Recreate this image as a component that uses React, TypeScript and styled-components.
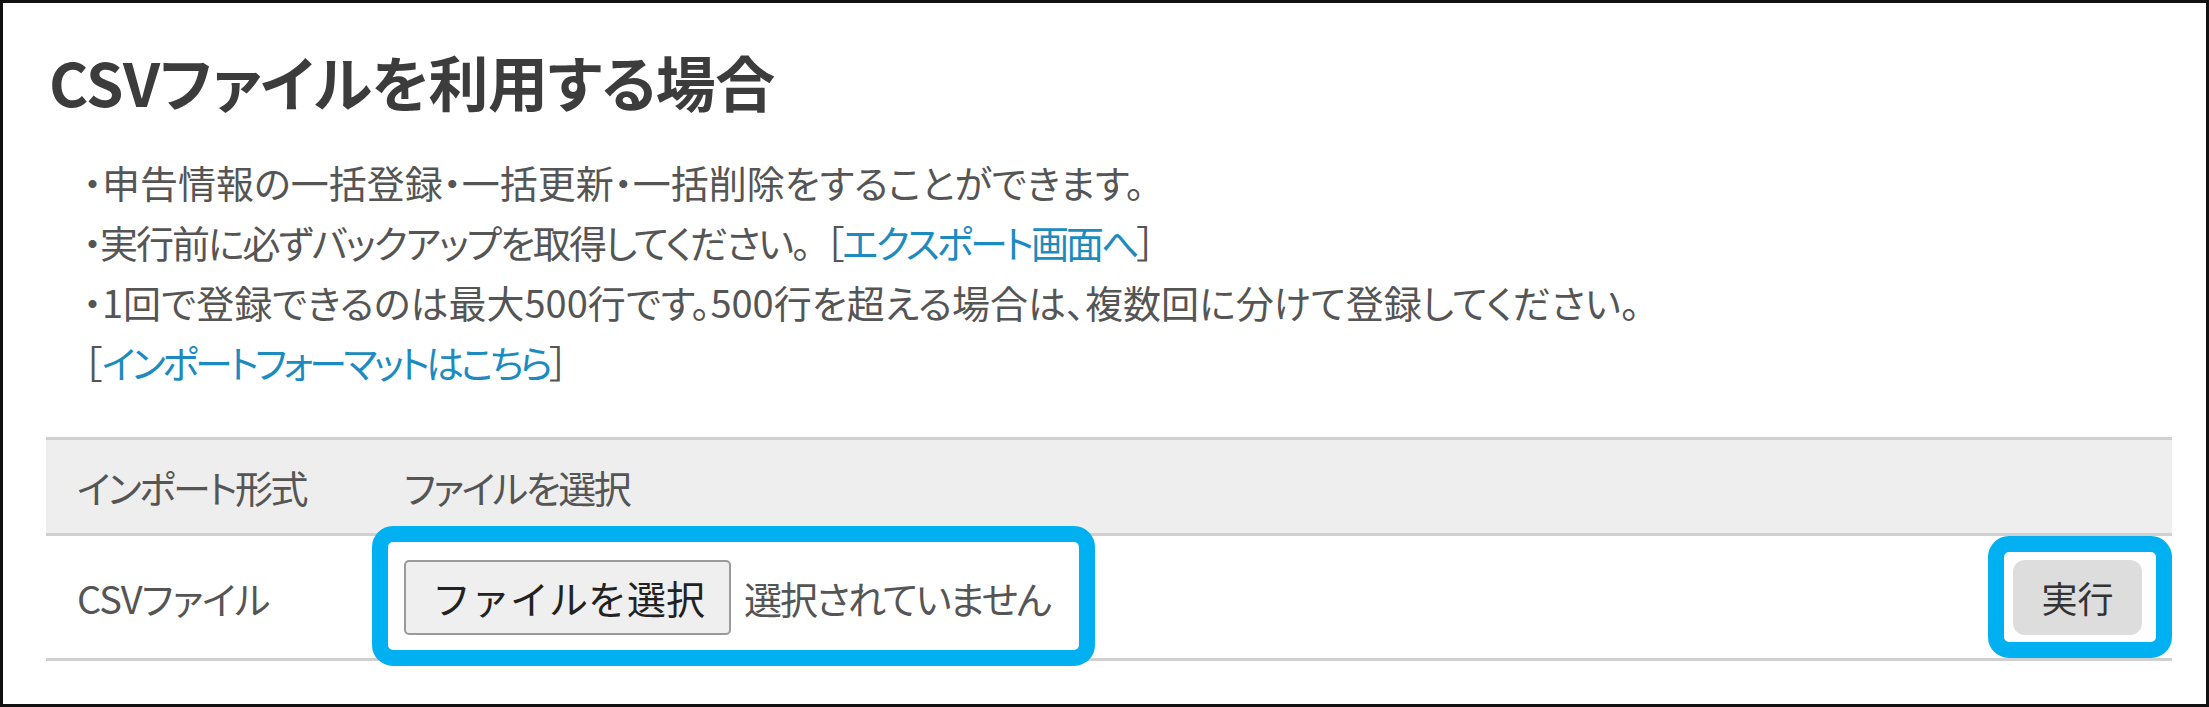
import React from "react";
import styled, { createGlobalStyle } from "styled-components";

const Global = createGlobalStyle`
  html, body { margin: 0; padding: 0; background: #ffffff; }
  body { font-family: "Noto Sans CJK JP", "Noto Sans", sans-serif; }
`;

const Frame = styled.div`
  box-sizing: border-box;
  width: 2209px;
  height: 707px;
  border: 3px solid #111111;
  padding: 43px 34px 0 43px;
  background: #ffffff;
  color: #555555;
  font-family: "Noto Sans CJK JP", "Noto Sans", sans-serif;
  font-feature-settings: "palt";
`;

const Title = styled.h1`
  margin: 0;
  font-size: 60px;
  line-height: 70px;
  font-weight: 700;
  color: #3c3c3c;
  padding-left: 3px;
  letter-spacing: -0.5px;
`;

const Notes = styled.ul`
  list-style: none;
  margin: 36px 0 0;
  padding: 0 0 0 37px;
`;

const Note = styled.li<{ $indent?: number; $tracking?: number }>`
  font-size: 38px;
  line-height: 60px;
  white-space: nowrap;
  padding-left: ${(p) => p.$indent ?? 0}px;
  letter-spacing: ${(p) => p.$tracking ?? 0}px;
`;

const Bracket = styled.span<{ $gap?: number }>`
  margin-left: ${(p) => p.$gap ?? 0}px;
`;

const Link = styled.a<{ $tracking?: number }>`
  color: #1c8bbf;
  text-decoration: none;
  letter-spacing: ${(p) => p.$tracking ?? -3}px;
`;

const Table = styled.div`
  margin-top: 45px;
  width: 2126px;
  font-size: 38px;
`;

const HeaderRow = styled.div`
  display: flex;
  align-items: center;
  height: 93px;
  background: #eeeeee;
  border-top: 3px solid #d0d0d0;
  border-bottom: 3px solid #d0d0d0;
`;

const BodyRow = styled.div`
  display: flex;
  align-items: center;
  height: 122px;
  border-bottom: 3px solid #d0d0d0;
`;

const FormatCell = styled.div<{ $tracking?: number }>`
  box-sizing: border-box;
  width: 358px;
  padding-left: 31px;
  white-space: nowrap;
  letter-spacing: ${(p) => p.$tracking ?? -2}px;
`;

const FileCell = styled.div`
  flex: 1;
  display: flex;
  align-items: center;
  white-space: nowrap;
`;

const HeaderLabel = styled.span`
  letter-spacing: -2.5px;
`;

const RunCell = styled.div`
  padding-right: 30px;
`;

const Highlight = styled.div<{ $left: number; $top: number; $w: number; $h: number }>`
  position: relative;
  display: inline-flex;
  align-items: center;
  gap: 13px;
  &::after {
    content: "";
    position: absolute;
    box-sizing: border-box;
    left: ${(p) => p.$left}px;
    top: ${(p) => p.$top}px;
    width: ${(p) => p.$w}px;
    height: ${(p) => p.$h}px;
    border: 16px solid #00b0f0;
    border-radius: 21px;
    pointer-events: none;
  }
`;

const FileButton = styled.button`
  box-sizing: border-box;
  height: 75px;
  padding: 0 24px 0 26px;
  font-family: "Noto Sans CJK JP", sans-serif;
  font-feature-settings: normal;
  font-size: 39px;
  color: #222222;
  background: #efefef;
  border: 2px solid #9a9a9a;
  border-radius: 5px;
  line-height: 1;
`;

const Status = styled.span`
  color: #555555;
  font-size: 38px;
  letter-spacing: -2px;
`;

const RunButton = styled.button`
  box-sizing: border-box;
  width: 129px;
  height: 75px;
  padding: 0;
  font-family: "Noto Sans CJK JP", sans-serif;
  font-feature-settings: normal;
  font-size: 36px;
  color: #333333;
  background: #dddddd;
  border: none;
  border-radius: 12px;
  line-height: 1;
`;

export default function App() {
  return (
    <>
      <Global />
      <Frame>
        <Title>CSVファイルを利用する場合</Title>
        <Notes>
          <Note>・申告情報の一括登録・一括更新・一括削除をすることができます。</Note>
          <Note $tracking={-2}>
            ・実行前に必ずバックアップを取得してください。
            <Bracket $gap={16}>
              ［<Link href="#">エクスポート画面へ</Link>］
            </Bracket>
          </Note>
          <Note>・1回で登録できるのは最大500行です。500行を超える場合は、複数回に分けて登録してください。</Note>
          <Note>
            ［<Link href="#" $tracking={-3.5}>インポートフォーマットはこちら</Link>］
          </Note>
        </Notes>
        <Table>
          <HeaderRow>
            <FormatCell $tracking={-2.5}>インポート形式</FormatCell>
            <FileCell>
              <HeaderLabel>ファイルを選択</HeaderLabel>
            </FileCell>
          </HeaderRow>
          <BodyRow>
            <FormatCell $tracking={-1}>CSVファイル</FormatCell>
            <FileCell>
              <Highlight $left={-32} $top={-34} $w={723} $h={140}>
                <FileButton type="button">ファイルを選択</FileButton>
                <Status>選択されていません</Status>
              </Highlight>
            </FileCell>
            <RunCell>
              <Highlight $left={-25} $top={-24} $w={184} $h={122}>
                <RunButton type="button">実行</RunButton>
              </Highlight>
            </RunCell>
          </BodyRow>
        </Table>
      </Frame>
    </>
  );
}
